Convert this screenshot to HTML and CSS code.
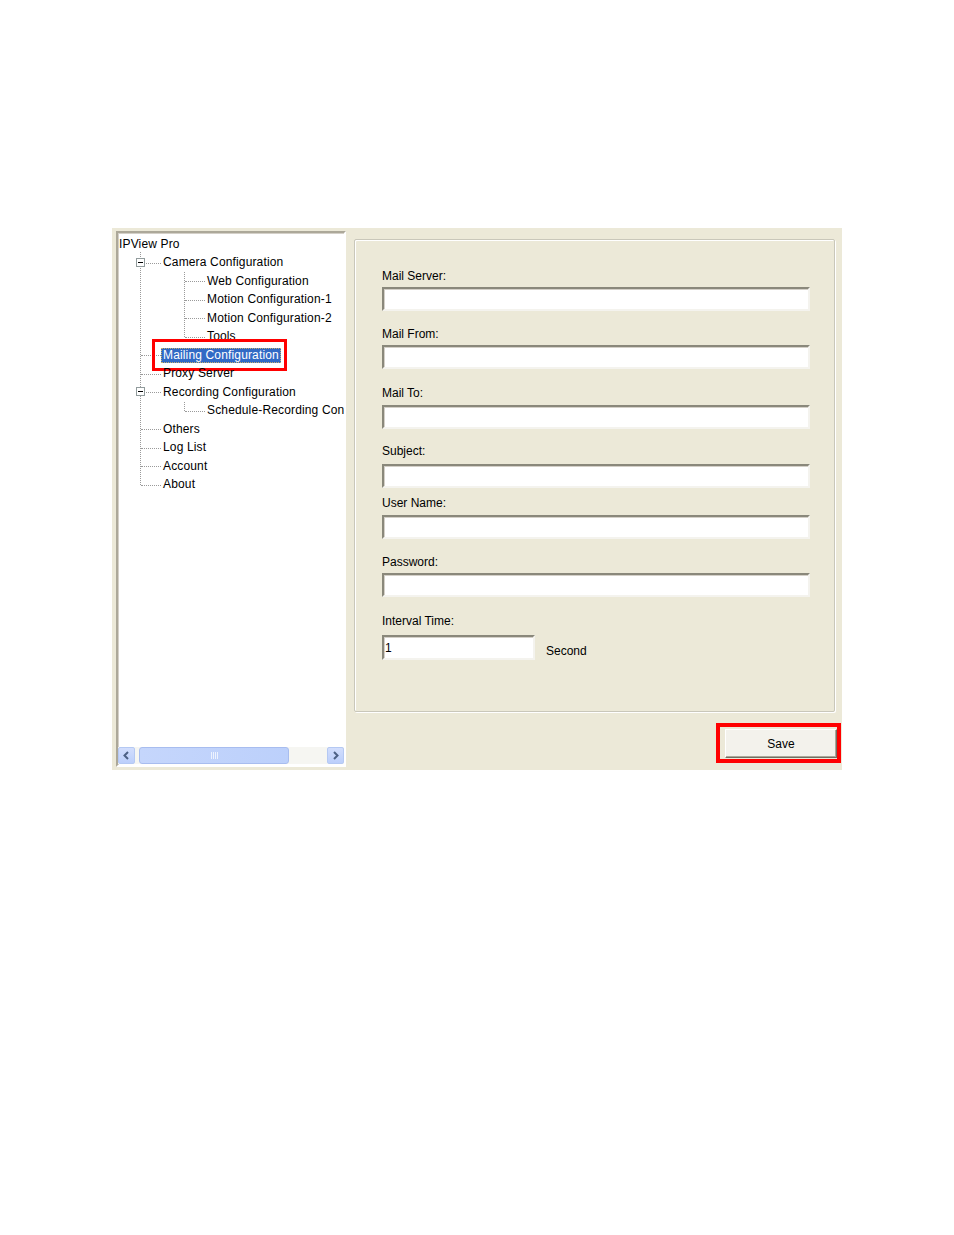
FILE: index.html
```html
<!DOCTYPE html>
<html lang="en">
<head>
  <meta charset="UTF-8">
  <title>IPView Pro - Mailing Configuration</title>
  <link rel="stylesheet" href="styles.css">
</head>
<body>

<div class="window">
  <div class="tree-panel">
    <div class="tree">
      <div class="row root"><span class="label">IPView Pro</span></div>
      <div class="branch l1">
        <div class="row lv1"><span class="exp"></span><span class="label">Camera Configuration</span></div>
        <div class="branch l2">
          <div class="row lv2"><span class="label">Web Configuration</span></div>
          <div class="row lv2"><span class="label">Motion Configuration-1</span></div>
          <div class="row lv2"><span class="label">Motion Configuration-2</span></div>
          <div class="row lv2"><span class="label">Tools</span></div>
        </div>
        <div class="row lv1"><span class="label selected">Mailing Configuration</span></div>
        <div class="row lv1"><span class="label">Proxy Server</span></div>
        <div class="row lv1"><span class="exp"></span><span class="label">Recording Configuration</span></div>
        <div class="branch l2">
          <div class="row lv2"><span class="label">Schedule-Recording Configuration</span></div>
        </div>
        <div class="row lv1"><span class="label">Others</span></div>
        <div class="row lv1"><span class="label">Log List</span></div>
        <div class="row lv1"><span class="label">Account</span></div>
        <div class="row lv1"><span class="label">About</span></div>
      </div>
    </div>

    <div class="hscroll">
      <span class="sb-btn">
        <svg width="9" height="9" viewBox="0 0 9 9"><path d="M6 1 L2.5 4.5 L6 8" fill="none" stroke="#4d6185" stroke-width="2"/></svg>
      </span>
      <span class="sb-track">
        <span class="sb-thumb"><span class="grip"></span></span>
      </span>
      <span class="sb-btn">
        <svg width="9" height="9" viewBox="0 0 9 9"><path d="M3 1 L6.5 4.5 L3 8" fill="none" stroke="#4d6185" stroke-width="2"/></svg>
      </span>
    </div>
  </div>

  <div class="settings">
    <div class="groupbox">
      <div class="field">
        <label>Mail Server:</label>
        <input type="text">
      </div>
      <div class="field mb17">
        <label>Mail From:</label>
        <input type="text">
      </div>
      <div class="field mb15">
        <label class="lb5">Mail To:</label>
        <input type="text">
      </div>
      <div class="field mb8">
        <label class="lb6">Subject:</label>
        <input type="text">
      </div>
      <div class="field">
        <label class="lb5">User Name:</label>
        <input type="text">
      </div>
      <div class="field mb17">
        <label>Password:</label>
        <input type="password">
      </div>
      <div class="field">
        <label class="lb7">Interval Time:</label>
        <div class="interval">
          <input type="text" class="short" value="1">
          <span class="unit">Second</span>
        </div>
      </div>
    </div>

    <div class="actions">
      <span class="mark">
        <button>Save</button>
      </span>
    </div>
  </div>
</div>

</body>
</html>
```

FILE: styles.css
```css
body {
  margin: 0;
  background: #fff;
  font-family: "Liberation Sans", Arial, sans-serif;
  font-size: 12px;
  color: #000;
}
.window {
  margin: 228px 0 0 112px;
  width: 730px;
  height: 542px;
  box-sizing: border-box;
  padding: 3px 0 3px 4px;
  background: #ece9d8;
  display: flex;
}

/* tree */
.tree-panel {
  width: 230px;
  box-sizing: border-box;
  border: 2px solid;
  border-color: #aca899 #fff #fff #aca899;
  box-shadow: inset 1px 1px 0 #d4d0c8;
  background: #fff;
  display: flex;
  flex-direction: column;
}
.tree {
  flex: 1;
  padding-top: 2px;
  overflow: hidden;
  white-space: nowrap;
  letter-spacing: 0.15px;
}
.row {
  position: relative;
  height: 18.5px;
  display: flex;
  align-items: center;
}
.root .label {
  padding: 0 1px;
}
.lv1 {
  padding-left: 43px;
}
.lv2 {
  padding-left: 87px;
}
.lv1::before, .lv2::before {
  content: "";
  position: absolute;
  top: 50%;
  width: 20px;
  border-top: 1px dotted #9a9a9a;
}
.lv1::before {
  left: 23px;
}
.lv2::before {
  left: 67px;
}
.branch {
  position: relative;
}
.branch::before {
  content: "";
  position: absolute;
  top: 0;
  bottom: 9px;
  border-left: 1px dotted #9a9a9a;
}
.l1::before {
  left: 22px;
  top: -2px;
}
.l2::before {
  left: 66px;
}
.label {
  display: inline-block;
  line-height: 15px;
  padding: 0 2px;
}
.label.selected {
  position: relative;
  background: #316ac5;
  color: #fff;
  outline: 1px dotted #c8b070;
  outline-offset: -1px;
}
.label.selected::after {
  content: "";
  position: absolute;
  left: -9px;
  top: -9px;
  right: -6px;
  bottom: -8px;
  border: 3px solid #f00;
}
.exp {
  position: absolute;
  left: 18px;
  top: calc(50% - 5px);
  width: 7px;
  height: 7px;
  border: 1px solid #919b9c;
  background: #fff;
  z-index: 1;
}
.exp::before {
  content: "";
  position: absolute;
  left: 1px;
  top: 3px;
  width: 5px;
  height: 1px;
  background: #000;
}

/* horizontal scrollbar */
.hscroll {
  height: 17px;
  margin-bottom: 1px;
  display: flex;
  background: #f6f6f2;
}
.sb-btn {
  width: 17px;
  height: 17px;
  box-sizing: border-box;
  border: 1px solid #b5c9f3;
  border-radius: 2px;
  background: linear-gradient(#d2defd, #bccffb);
  display: flex;
  align-items: center;
  justify-content: center;
}
.sb-track {
  flex: 1;
  padding: 0 3px 0 4px;
}
.sb-thumb {
  display: flex;
  align-items: center;
  justify-content: center;
  width: 150px;
  height: 17px;
  box-sizing: border-box;
  border: 1px solid #a8bdef;
  border-radius: 3px;
  background: linear-gradient(90deg, #c5d6fc, #bcd0fb);
}
.grip {
  width: 7px;
  height: 7px;
  background: repeating-linear-gradient(90deg, #eef3fe 0 1px, transparent 1px 2px);
}

/* settings */
.settings {
  flex: 1;
  margin-left: 8px;
  padding: 8px 1px 0 0;
  display: flex;
  flex-direction: column;
}
.groupbox {
  width: 481px;
  height: 473px;
  box-sizing: border-box;
  border: 1px solid #c9c7ba;
  border-radius: 2px;
  box-shadow: inset 1px 1px 0 #fff, 1px 1px 0 #fff;
  padding: 29px 24px 0 27px;
}
.field {
  margin-bottom: 16px;
}
.field label {
  display: block;
  line-height: 14px;
  margin-bottom: 4px;
}
.field label.lb5 {
  margin-bottom: 5px;
}
.field label.lb6 {
  margin-bottom: 6px;
}
.field label.lb7 {
  margin-bottom: 7px;
}
.mb17 {
  margin-bottom: 17px;
}
.mb15 {
  margin-bottom: 15px;
}
.mb8 {
  margin-bottom: 8px;
}
input {
  display: block;
  width: 100%;
  height: 24px;
  box-sizing: border-box;
  margin: 0;
  padding: 0 2px;
  border: 2px solid;
  border-color: #8a887b #f4f3ee #f4f3ee #8a887b;
  box-shadow: inset 1px 1px 0 #d4d0c8;
  background: #fff;
  font: 12px "Liberation Sans", Arial, sans-serif;
  color: #000;
}
.interval {
  display: flex;
  align-items: center;
}
input.short {
  width: 153px;
  height: 25px;
  padding: 0 1px;
}
.unit {
  margin: 7px 0 0 11px;
}

.actions {
  display: flex;
  justify-content: flex-end;
  margin-top: 11px;
}
.mark {
  display: inline-block;
  border: 4px solid #f00;
  padding: 2px 0 1px 5px;
}
button {
  display: block;
  width: 112px;
  height: 29px;
  box-sizing: border-box;
  border: 1px solid;
  border-color: #fff #716f64 #716f64 #fff;
  box-shadow: inset -1px -1px 0 #aca899;
  background: #f3f2ec;
  font: 12px "Liberation Sans", Arial, sans-serif;
  color: #000;
  padding: 0;
  cursor: pointer;
}
```
